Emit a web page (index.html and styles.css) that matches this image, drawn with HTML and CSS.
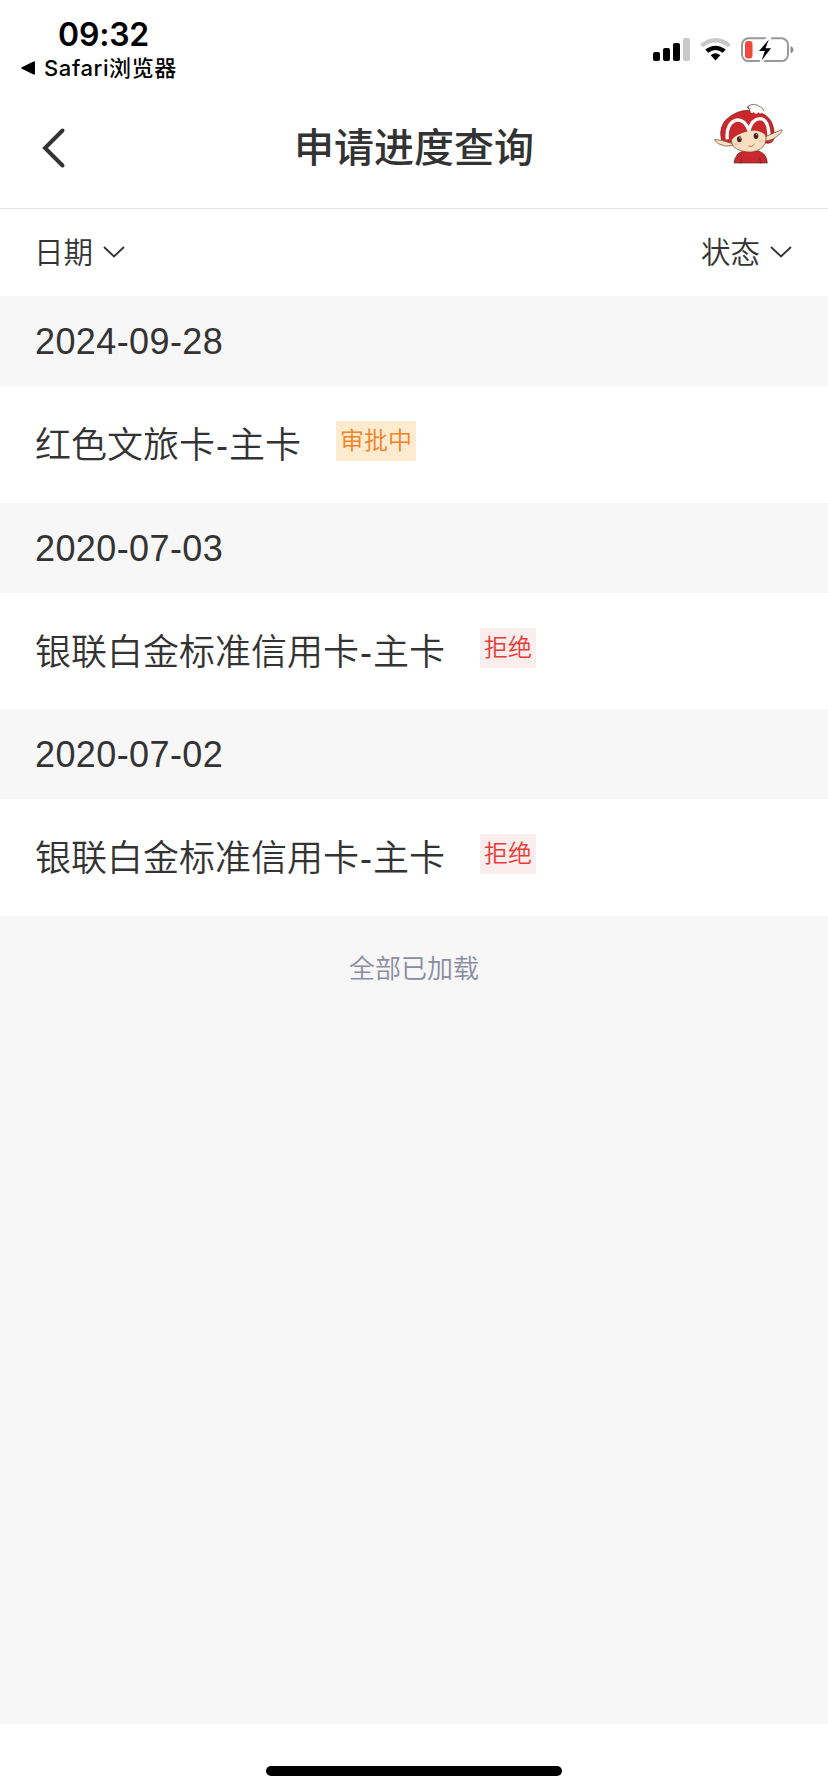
FILE: index.html
```
<!DOCTYPE html>
<html lang="zh-CN">
<head>
    <meta charset="UTF-8">
    <title>申请进度查询</title>
    <link rel="stylesheet" href="styles.css">
</head>
<body>

<div class="page">
    <div class="status">
        <div class="status-left">
            <p class="time">09:32</p>
            <p class="back-app">
                <svg width="14" height="14" viewBox="0 0 14 14"><path d="M12.6.4Q14 0 14 1.4v11.2q0 1.4-1.4.9L.8 7.8Q-.4 7 .8 6.3z"/></svg>
                <span>Safari浏览器</span>
            </p>
        </div>
        <div class="status-right">
            <svg width="142" height="26" viewBox="0 0 142 26">
                <!-- 信号 -->
                <rect x="0" y="14" width="7" height="9" rx="2"/>
                <rect x="10" y="10" width="7" height="13" rx="2"/>
                <rect x="20" y="5" width="7" height="18" rx="2"/>
                <rect x="30" y="0" width="7" height="23" rx="2" fill="#c9c9c9"/>
                <!-- wifi -->
                <path d="M47 6.2Q62.5-6 78 6.2L75 9.3Q62.5-.2 50 9.3z" fill="#c9c9c9"/>
                <path d="M52.2 11.5Q62.5 3.8 72.8 11.5L69.7 14.7Q62.5 9.4 55.3 14.7z"/>
                <path d="M57.7 17.2Q62.5 13.5 67.3 17.2L62.5 22.5z"/>
                <!-- 电池 -->
                <rect x="89" y="0.3" width="46" height="22.8" rx="6.5" fill="none" stroke="#999" stroke-width="2"/>
                <rect x="92" y="3" width="7.5" height="17.5" rx="3" fill="#f04a3c"/>
                <path d="M137.5 8q3 1.3 3 3.7t-3 3.7z" fill="#8c8c8c"/>
                <path d="M115.5-1L105.5 13h6l-3.5 11.5L119 10h-6l4-11z" stroke="#fff" stroke-width="3" fill="#fff"/>
                <path d="M115.8 1.5L106 13h5.8l-3.2 9.5L118 10.2h-5.5z"/>
            </svg>
        </div>
    </div>

    <div class="header">
        <svg class="back" width="24" height="40" viewBox="0 0 24 40"><path d="M20.5 2.5L3 20l17.5 17.5"/></svg>
        <h1>申请进度查询</h1>
        <svg class="avatar" width="70" height="62" viewBox="0 0 210 186">
            <path d="M60 180q4-30 28-36h46q24 8 26 36z" fill="#c9282d" stroke="#5b2522" stroke-width="2"/>
            <path d="M80 182l3-18M140 182l-3-18" stroke="#5b2522" stroke-width="2" fill="none"/>
            <path d="M22 110Q12 62 50 39Q88 12 135 27Q186 43 180 108Q172 124 156 120L50 118Q36 122 22 110z" fill="#c9282d" stroke="#74201f" stroke-width="2"/>
            <path d="M40 109C36 75 50 53 70 51C88 50 98 64 105 82C110 62 122 48 138 47C158 48 164 72 165 98" fill="none" stroke="#fff" stroke-width="10"/>
            <path d="M109 27q7-10 2-16-8-5-10 1 0 4 4 3M109 27Q115 34 119 27Q128 38 132 28Q142 37 150 25Q134 4 104 7" fill="#fff"/>
            <path d="M109 27Q101 15 104 9Q119-2 138 11Q148 16 150 25M104 9Q98 10 101 15q4 5 9 1" fill="none" stroke="#6b302b" stroke-width="2"/>
            <path d="M52 121Q25 111 2 109Q1 115 15 123Q34 134 58 127z" fill="#f7dfc0" stroke="#6b4030" stroke-width="2"/>
            <path d="M155 101Q178 90 204 80Q207 84 194 96Q177 113 155 114z" fill="#f7dfc0" stroke="#6b4030" stroke-width="2"/>
            <path d="M52 112Q65 93 105 84Q136 77 155 98Q160 123 140 137Q115 153 84 144Q53 137 52 112z" fill="#f7dfc0"/>
            <path d="M155 98Q160 123 140 137Q115 153 84 144Q53 137 52 112" fill="none" stroke="#6b4030" stroke-width="2"/>
            <ellipse cx="76" cy="109" rx="7" ry="9" fill="#482323"/>
            <ellipse cx="126" cy="99" rx="7" ry="9" fill="#482323"/>
            <circle cx="78" cy="105" r="2" fill="#fff"/>
            <circle cx="128" cy="95" r="2" fill="#fff"/>
            <ellipse cx="66" cy="124" rx="7" ry="4" fill="#f6c4ae"/>
            <ellipse cx="142" cy="114" rx="7" ry="4" fill="#f6c4ae"/>
            <path d="M103 129q12 5 19-6" fill="none" stroke="#914138" stroke-width="2"/>
        </svg>
    </div>

    <div class="filter">
        <div class="filter-item">日期<svg width="22" height="12" viewBox="0 0 22 12"><path d="M1 1l10 9.5L21 1"/></svg></div>
        <div class="filter-item">状态<svg width="22" height="12" viewBox="0 0 22 12"><path d="M1 1l10 9.5L21 1"/></svg></div>
    </div>

    <div class="list">
        <h2>2024-09-28</h2>
        <div class="card">
            <p>红色文旅卡<i>-</i>主卡</p>
            <span class="tag wait">审批中</span>
        </div>
        <h2>2020-07-03</h2>
        <div class="card">
            <p>银联白金标准信用卡<i>-</i>主卡</p>
            <span class="tag refuse">拒绝</span>
        </div>
        <h2>2020-07-02</h2>
        <div class="card">
            <p>银联白金标准信用卡<i>-</i>主卡</p>
            <span class="tag refuse">拒绝</span>
        </div>
        <div class="loaded">全部已加载</div>
    </div>

    <div class="home"><span></span></div>
</div>

</body>
</html>
```
FILE: styles.css
```
/*重置样式*/
*{margin: 0;padding: 0;box-sizing: border-box;}
body{background-color: #fff;color: #333;font-family: "Liberation Sans","Noto Sans CJK SC",sans-serif;}
svg{display: block;overflow: visible;}
.page{width: 828px;height: 1792px;display: flex;flex-direction: column;overflow: hidden;}

/*状态栏*/
.status{height: 88px;display: flex;justify-content: space-between;color: #000;font-family: Inter,"Noto Sans CJK SC",sans-serif;}
.status-left{padding: 16px 0 0 21px;}
.time{padding-left: 37px;font-size: 32px;line-height: 38px;font-weight: 600;letter-spacing: -0.2px;}
.back-app{display: flex;align-items: center;font-size: 22px;line-height: 28px;font-weight: 500;white-space: nowrap;}
.back-app span{margin-left: 9px;letter-spacing: 0.6px;}
.status-right{padding: 38px 33px 0 0;}

/*标题栏*/
.header{height: 121px;display: flex;align-items: center;justify-content: space-between;padding: 0 44px 0 42px;border-bottom: 1px solid #e6e6e6;}
.header h1{font-size: 40px;line-height: 60px;font-weight: 500;margin: 0 0 0 48px;}
.back path{fill: none;stroke: #333;stroke-width: 4;stroke-linecap: round;}
.avatar{margin: 0 0 29px;}

/*筛选*/
.filter{height: 87px;display: flex;justify-content: space-between;padding: 0 36px 0 34px;}
.filter-item{display: flex;align-items: center;font-size: 29.5px;font-weight: 350;height: 81px;}
.filter-item svg{margin: 5px 0 0 10px;}
.filter-item path{fill: none;stroke: #333;stroke-width: 1.8;}

/*列表*/
.list{flex: 1;background-color: #f7f7f7;}
.list h2{height: 90px;line-height: 92px;padding-left: 35px;font-size: 36px;font-weight: 400;letter-spacing: 0.4px;}
.card{height: 116.5px;display: flex;align-items: flex-start;padding: 35px 35px 0;background-color: #fff;}
.card p{font-size: 36px;line-height: 50px;font-weight: 350;}
.card i{font-style: normal;padding: 0 1px;}
.tag{height: 40px;margin-left: 35px;padding: 0 4px;font-size: 24px;line-height: 40px;font-weight: 350;}
.wait{color: #f08228;background-color: #fcebcf;}
.refuse{color: #e63c37;background-color: #f9eded;}
.loaded{padding-top: 34px;text-align: center;font-size: 26px;line-height: 38px;font-weight: 350;color: #8a8ca0;}

/*底部横条*/
.home{height: 68px;padding-top: 42px;}
.home span{display: block;width: 296px;height: 10px;margin: 0 auto;border-radius: 5px;background-color: #000;}
```
